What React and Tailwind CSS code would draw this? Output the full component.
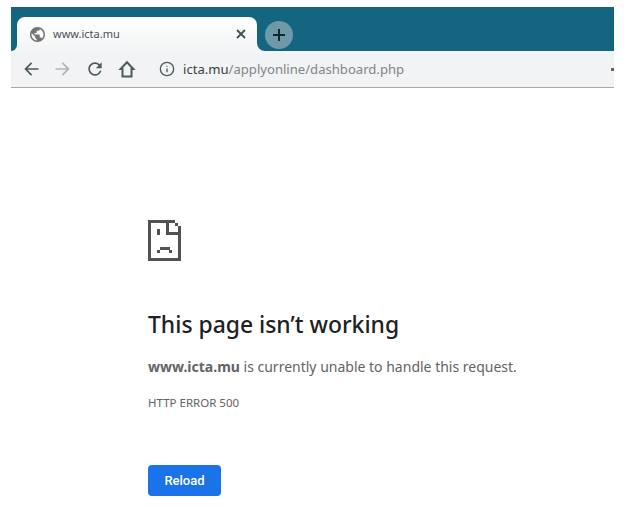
import { Info } from 'lucide-react';

const FONT = "font-['Noto_Sans','Open_Sans',sans-serif]";

// Pixel blocks of the sad tab icon, on a 3px grid
const SAD_TAB = [
  [0, 0, 27, 3], [0, 0, 3, 41], [0, 38, 33, 3], [30, 6, 3, 35],
  [27, 3, 3, 3], [18, 3, 3, 12], [18, 12, 15, 3],
  [9, 9, 3, 6], [12, 27, 10, 3], [9, 30, 3, 3], [21, 30, 3, 3],
];

const SadTabIcon = () => (
  <svg width="33" height="41" viewBox="0 0 33 41" fill="#525252" shapeRendering="crispEdges">
    {SAD_TAB.map(([x, y, w, h], i) => (
      <rect key={i} x={x} y={y} width={w} height={h} />
    ))}
  </svg>
);

const Globe = () => (
  <svg width="15" height="15" viewBox="2 2 20 20" fill="#757575">
    <path d="M12 2C6.48 2 2 6.48 2 12s4.48 10 10 10 10-4.48 10-10S17.52 2 12 2zm-1 17.93c-3.95-.49-7-3.85-7-7.93 0-.62.08-1.21.21-1.79L9 15v1c0 1.1.9 2 2 2v1.93zm6.9-2.54c-.26-.81-1-1.39-1.9-1.39h-1v-3c0-.55-.45-1-1-1H8v-2h2c.55 0 1-.45 1-1V7h2c1.1 0 2-.9 2-2v-.41c2.93 1.19 5 4.06 5 7.41 0 2.08-.8 3.97-2.1 5.39z" />
  </svg>
);

const Arrow = ({ flip, color }) => (
  <svg width="20" height="20" viewBox="0 0 24 24" fill={color} className={flip ? 'rotate-180' : ''}>
    <path d="M21 11H7.83l5.59-5.59L12 4l-8 8 8 8 1.41-1.41L7.83 13H21v-2z" />
  </svg>
);

const ReloadIcon = () => (
  <svg width="20" height="20" viewBox="0 0 24 24" fill="#4f5b5b">
    <path d="M17.65 6.35A7.958 7.958 0 0 0 12 4c-4.42 0-7.99 3.58-7.99 8s3.57 8 7.99 8c3.73 0 6.84-2.55 7.73-6h-2.08A5.99 5.99 0 0 1 12 18c-3.31 0-6-2.69-6-6s2.69-6 6-6c1.66 0 3.14.69 4.22 1.78L13 11h7V4l-2.35 2.35z" />
  </svg>
);

const HomeIcon = () => (
  <svg width="18" height="18" viewBox="0 0 18 18" fill="none" stroke="#4f5b5b" strokeWidth="2">
    <path d="M9 2.2 2.6 9H4.5v7.5h9V9h1.9z" />
  </svg>
);

export default function App() {
  return (
    <div className={`min-h-[511px] bg-white pt-[7px] pl-[11px] pr-[23px] ${FONT}`}>
      {/* Tab strip */}
      <div className="flex h-[44px] items-end bg-[#14657f] pl-[6px]">
        <div className="relative flex h-[34px] w-[240px] items-center rounded-t-[8px] bg-gradient-to-b from-white to-[#f3f4f5] pl-[13px] pr-[11px]">
          <div className="absolute bottom-0 left-[-6px] h-[6px] w-[6px] bg-[#f3f4f5]">
            <div className="h-full w-full rounded-br-[6px] bg-[#14657f]" />
          </div>
          <div className="absolute bottom-0 right-[-8px] h-[8px] w-[8px] bg-[#f3f4f5]">
            <div className="h-full w-full rounded-bl-[8px] bg-[#14657f]" />
          </div>
          <Globe />
          <span className="ml-[8px] text-[11px] text-[#4a4f55]">www.icta.mu</span>
          <svg width="10" height="10" viewBox="0 0 10 10" className="ml-auto" stroke="#3f5257" strokeWidth="1.8">
            <path d="M1 1l8 8M9 1L1 9" />
          </svg>
        </div>
        <div className="mb-[2px] ml-[8px] flex h-[28px] w-[28px] items-center justify-center rounded-full bg-[#6f99a8]">
          <svg width="14" height="14" viewBox="0 0 14 14" stroke="#10292f" strokeWidth="2">
            <path d="M7 1v12M1 7h12" />
          </svg>
        </div>
      </div>

      {/* Toolbar */}
      <div className="flex h-[37px] items-center border-b border-[#a9a9a9] bg-[#f1f3f4] pl-[10px]">
        <Arrow color="#4f5b5b" />
        <span className="ml-[12px]"><Arrow flip color="#b0b6b6" /></span>
        <span className="ml-[12px]"><ReloadIcon /></span>
        <span className="ml-[13px]"><HomeIcon /></span>
        <Info size={16} color="#4f5b5b" className="ml-[23px]" />
        <span className="ml-[8px] pt-[1px] text-[13.1px] text-[#80868b]">
          <span className="text-[#3c4043]">icta.mu</span>/applyonline/dashboard.php
        </span>
        <div className="ml-auto h-[3px] w-[3px] bg-[#5f6368]" />
      </div>

      {/* Error page */}
      <div className="pl-[137px] pt-[132px]">
        <SadTabIcon />
        <h1 className="mt-[44px] text-[22.9px] leading-[40px] font-medium text-[#202124]">
          This page isn’t working
        </h1>
        <p className="mt-[10px] text-[14px] leading-[24px] text-[#646464]">
          <strong className="font-bold">www.icta.mu</strong> is currently unable to handle this request.
        </p>
        <p className="mt-[16px] text-[11.5px] leading-[16px] text-[#646464]">HTTP ERROR 500</p>
        <button className="mt-[54px] flex h-[31px] w-[73px] items-center justify-center rounded-[4px] bg-[#1a73e8] font-['Roboto',sans-serif] text-[13px] font-medium text-white">
          Reload
        </button>
      </div>
    </div>
  );
}
